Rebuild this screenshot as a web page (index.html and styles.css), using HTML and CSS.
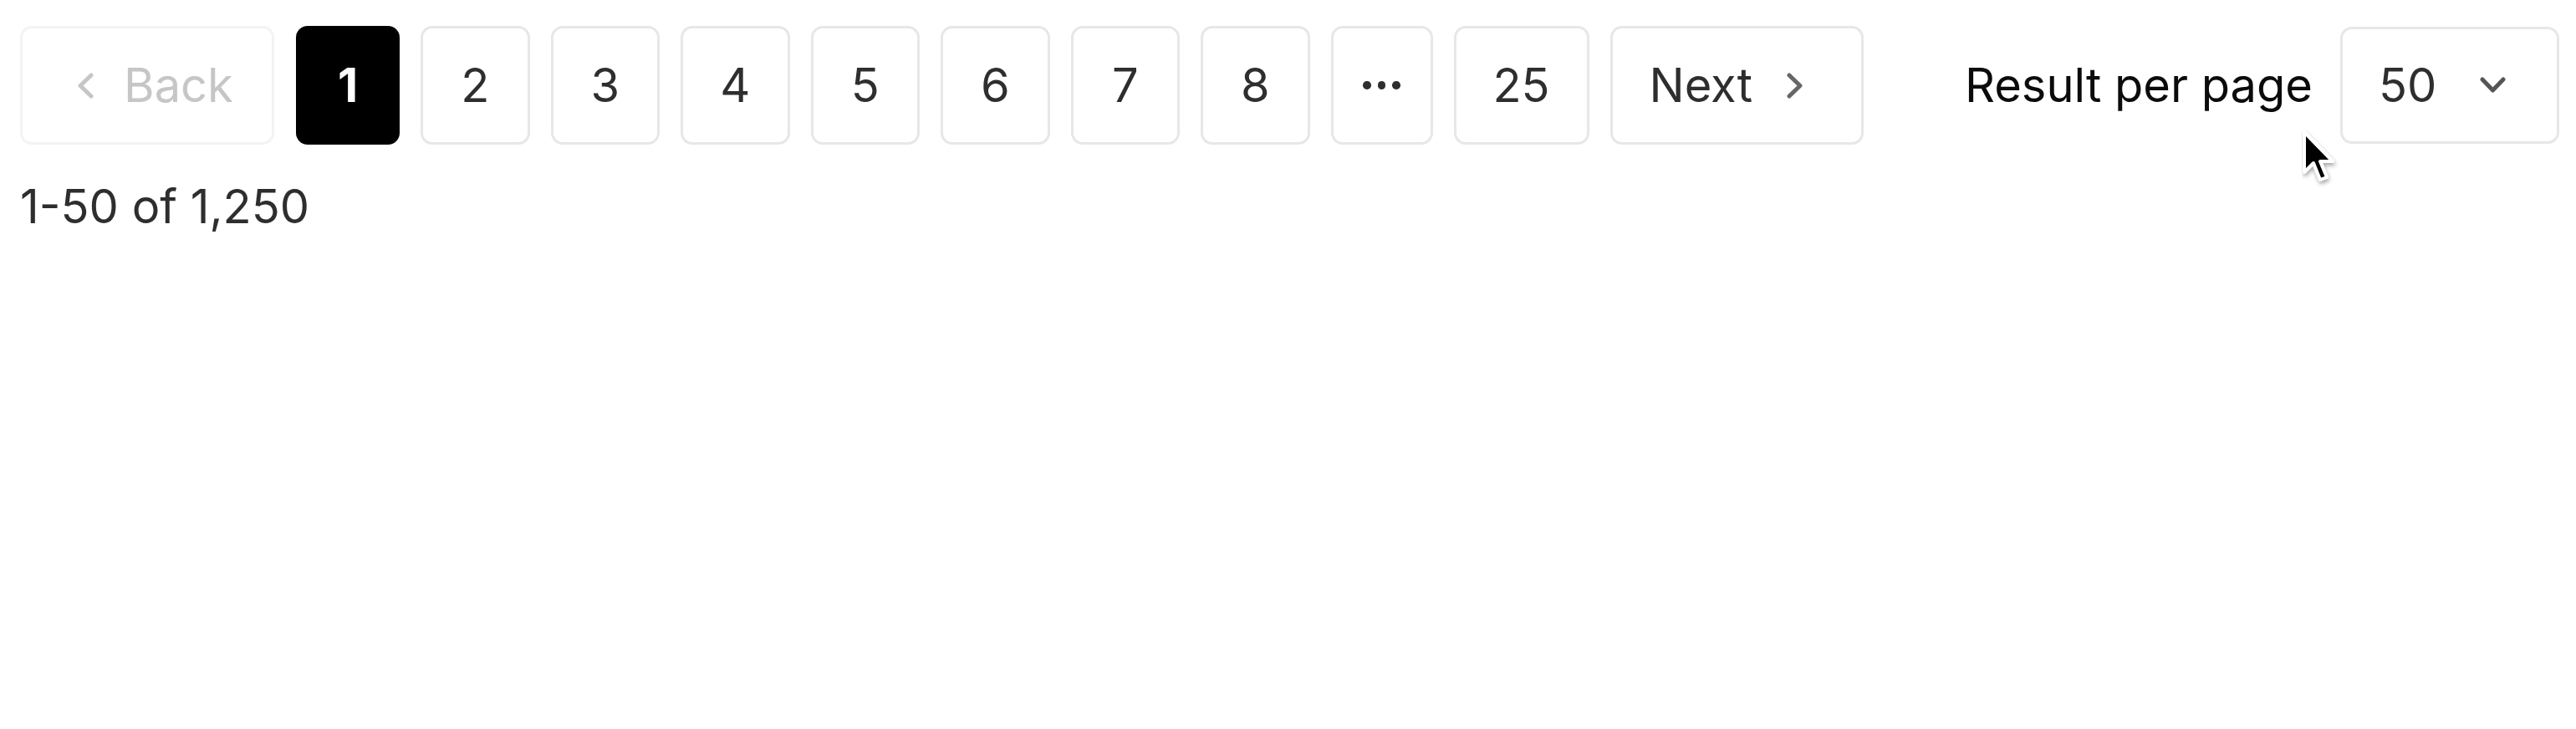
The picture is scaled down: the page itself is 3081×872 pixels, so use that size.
FILE: index.html
```html
<!DOCTYPE html>
<html lang="en">
<head>
<meta charset="utf-8">
<title>Pagination</title>
<link rel="stylesheet" href="styles.css">
</head>
<body>
<div class="wrap">
  <div class="bar">
    <nav class="pager">
      <button class="btn nav back" disabled>
        <svg class="chev" width="20" height="31" viewBox="0 0 20 31"><polyline points="17,3 4,15.5 17,28" fill="none" stroke="currentColor" stroke-width="5" stroke-linecap="round" stroke-linejoin="round"/></svg>
        <span>Back</span>
      </button>
      <button class="btn page active">1</button>
      <button class="btn page">2</button>
      <button class="btn page">3</button>
      <button class="btn page">4</button>
      <button class="btn page">5</button>
      <button class="btn page">6</button>
      <button class="btn page">7</button>
      <button class="btn page">8</button>
      <button class="btn page gap-btn">
        <span class="dots"><i></i><i></i><i></i></span>
      </button>
      <button class="btn page wide">25</button>
      <button class="btn nav next">
        <span>Next</span>
        <svg class="chev" width="20" height="31" viewBox="0 0 20 31"><polyline points="3,3 16,15.5 3,28" fill="none" stroke="currentColor" stroke-width="5" stroke-linecap="round" stroke-linejoin="round"/></svg>
      </button>
    </nav>
    <div class="per-page">
      <span class="label">Result per page</span>
      <div class="select">
        <span>50</span>
        <svg class="down" width="31" height="20" viewBox="0 0 31 20"><polyline points="3,3 15.5,16 28,3" fill="none" stroke="currentColor" stroke-width="5" stroke-linecap="round" stroke-linejoin="round"/></svg>
      </div>
      <svg class="cursor" width="46" height="70" viewBox="0 0 46 70">
        <defs>
          <filter id="sh" x="-30%" y="-30%" width="160%" height="160%">
            <feDropShadow dx="1" dy="3" stdDeviation="2.5" flood-color="#000" flood-opacity="0.35"/>
          </filter>
        </defs>
        <path d="M3 3 L3 51 L14 40 L22 60 L30 57 L22 38 L37 38 Z" fill="#000" stroke="#fff" stroke-width="4" stroke-linejoin="round" filter="url(#sh)"/>
      </svg>
    </div>
  </div>
  <p class="summary">1-50 of 1,250</p>
</div>
</body>
</html>
```

FILE: styles.css
```css
html, body {
  margin: 0;
  padding: 0;
  background: #ffffff;
}

.wrap {
  padding: 31px 20px 0 24px;
  font-family: "Inter", "Liberation Sans", sans-serif;
  font-size: 56px;
  color: #2e2e2e;
}

.bar {
  display: flex;
  justify-content: space-between;
  align-items: center;
}

.pager {
  display: flex;
  align-items: center;
  gap: 25px;
}

.btn {
  box-sizing: border-box;
  height: 142px;
  border: 3px solid #e7e7e7;
  border-radius: 14px;
  background: #ffffff;
  font-family: inherit;
  font-size: 56px;
  color: #2e2e2e;
  display: flex;
  align-items: center;
  justify-content: center;
  padding: 0;
  margin: 0;
  cursor: pointer;
}

.page {
  width: 130.5px;
}

.page.active {
  width: 124px;
  margin-left: 1px;
  background: #000000;
  border-color: #000000;
  color: #ffffff;
  font-weight: 700;
}

.page.gap-btn {
  width: 122px;
}

.page.wide {
  width: 162px;
}

.dots {
  display: flex;
  gap: 8px;
}

.dots i {
  display: block;
  width: 9.5px;
  height: 9.5px;
  border-radius: 50%;
  background: #2e2e2e;
}

.nav {
  width: 304px;
  justify-content: flex-start;
}

.nav.back {
  padding-left: 65px;
  gap: 36px;
  border-color: #f3f3f3;
  color: #c6c6c6;
  cursor: default;
}

.nav.next {
  width: 303px;
  padding-left: 44px;
  gap: 41px;
}

.nav.next .chev {
  color: #666666;
}

.chev {
  display: block;
  flex: none;
}

.per-page {
  position: relative;
  display: flex;
  align-items: center;
  gap: 33px;
}

.label {
  color: #0b0b0b;
}

.select {
  box-sizing: border-box;
  width: 262px;
  height: 140px;
  border: 3px solid #e7e7e7;
  border-radius: 14px;
  display: flex;
  align-items: center;
  padding-left: 43px;
  gap: 52px;
  color: #2e2e2e;
}

.down {
  display: block;
  color: #555555;
  flex: none;
}

.cursor {
  position: absolute;
  left: 403px;
  top: 123px;
  pointer-events: none;
}

.summary {
  margin: 40px 0 0 0;
  line-height: 68px;
  color: #2e2e2e;
}
```
